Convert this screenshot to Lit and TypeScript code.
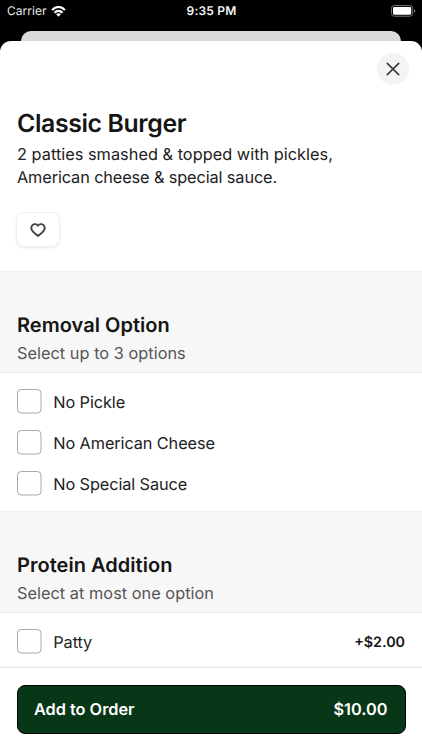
import { LitElement, html, css, nothing } from "lit";
import { customElement, property } from "lit/decorators.js";

interface Option { name: string; price?: string }

@customElement("status-bar")
class StatusBar extends LitElement {
  static styles = css`
    :host { display: grid; grid-template-columns: 1fr auto 1fr; align-items: center; height: 22px; padding: 0 6px 0 7px; box-sizing: border-box; color: #fff; font-size: 12px; line-height: 22px; }
    .left { display: flex; align-items: center; gap: 4.5px; color: #e4e4e4; letter-spacing: 0.02px; }
    .time { font-weight: 600; letter-spacing: 0.2px; color: #f4f4f4; }
    .right { display: flex; justify-content: flex-end; }
    svg { display: block; }
  `;
  render() {
    return html`
      <div class="left"><span>Carrier</span>
        <svg width="15" height="11" viewBox="0 0 16 12" fill="none" stroke="#fff" stroke-width="2.3">
          <path d="M1 4.5C5-0.1 11-0.1 15 4.5"/>
          <path d="M3.6 7.4C6.2 4.6 9.8 4.6 12.4 7.4"/>
          <path d="M8 11.7L5.4 9C7 7.7 9 7.7 10.6 9Z" fill="#fff" stroke="none"/>
        </svg>
      </div>
      <span class="time">9:35 PM</span>
      <div class="right">
        <svg width="25" height="12" viewBox="0 0 25 12">
          <rect x=".5" y=".6" width="21.2" height="10.6" rx="2.8" fill="none" stroke="#777" stroke-width="1"/>
          <rect x="2" y="2.1" width="18.2" height="7.6" rx="1.4" fill="#fff"/>
          <path d="M23 4.2q1.4.5 1.4 1.7T23 7.6Z" fill="#777"/>
        </svg>
      </div>`;
  }
}

@customElement("option-group")
class OptionGroup extends LitElement {
  @property() heading = "";
  @property() hint = "";
  @property({ attribute: false }) options: Option[] = [];
  static styles = css`
    :host { display: block; }
    header { height: 102px; box-sizing: border-box; padding: 39px 17px 0; background: #f7f7f7; border-top: 1px solid #efefef; border-bottom: 1px solid #ececec; }
    h2 { margin: 0; font-size: 20px; line-height: 29px; font-weight: 600; color: #151515; letter-spacing: 0.03px; }
    p { margin: 1px 0 0; font-size: 16.3px; line-height: 24px; color: #555; letter-spacing: 0.04px; }
    .rows { display: flex; flex-direction: column; gap: 16.3px; padding: 16.2px 17px 15.8px 16.5px; }
    .row { display: flex; align-items: center; height: 24.5px; font-size: 16.3px; line-height: 24px; color: #222; letter-spacing: -0.1px; }
    .row span { padding-top: 1.5px; }
    .box { flex: none; display: block; overflow: visible; width: 24.5px; height: 24.5px; margin-right: 12.3px; }
    .box rect { fill: #fff; stroke: #a8a8a8; }
    .row .price { margin-left: auto; padding-top: 2px; font-size: 14.3px; font-weight: 600; color: #151515; letter-spacing: 0; }
  `;
  render() {
    return html`
      <header><h2>${this.heading}</h2><p>${this.hint}</p></header>
      <div class="rows">
        ${this.options.map((o) => html`<div class="row"><svg class="box" viewBox="0 0 24.5 24.5"><rect x=".5" y=".5" width="23.5" height="23.5" rx="3.7"/></svg><span>${o.name}</span>
          ${o.price ? html`<span class="price">${o.price}</span>` : nothing}</div>`)}
      </div>`;
  }
}

@customElement("app-root")
class AppRoot extends LitElement {
  static styles = css`
    :host { display: flex; flex-direction: column; width: 422px; height: 750px; overflow: hidden; background: #000; font-family: Inter, "Liberation Sans", sans-serif; text-rendering: geometricPrecision; }
    .behind { flex: none; height: 10px; margin: 9px 21px 0; border-radius: 10px 10px 0 0; background: #dadada; }
    .sheet { flex: 1; min-height: 0; display: flex; flex-direction: column; background: #fff; border-radius: 11px 11px 0 0; overflow: hidden; }
    .content { height: 626px; flex: none; overflow: hidden; }
    .intro { display: flex; flex-direction: column; height: 230px; box-sizing: border-box; padding: 12px 13px 0 17px; }
    .close { align-self: flex-end; width: 32px; height: 32px; border-radius: 50%; background: #f4f4f4; display: flex; align-items: center; justify-content: center; }
    h1 { margin: 21px 0 0; font-size: 24.8px; line-height: 35px; font-weight: 600; color: #151515; letter-spacing: -0.36px; }
    .desc { margin: 2px 0 0; font-size: 16.3px; line-height: 22.5px; color: #222; letter-spacing: 0.035px; }
    .tight { letter-spacing: -0.11px; }
    .like { margin-top: 25px; width: 42px; height: 33px; border-radius: 7px; background: #fff; box-shadow: 0 0 0 1px #f0f0f0, 0 1px 3px 0 #0000002b; display: flex; align-items: center; justify-content: center; }
    svg { display: block; }
    .footer { flex: 1; box-sizing: border-box; padding: 16.5px 17px 0 16.5px; border-top: 1px solid #ebebeb; background: #fff; box-shadow: 0 -1px 1px #00000008; }
    .order { box-sizing: border-box; width: 389px; height: 49px; padding: 0 17px 1px 16.5px; display: flex; align-items: center; justify-content: space-between; background: #083718; border: 1px solid #000; border-radius: 8px; color: #fff; font-size: 16.3px; font-weight: 600; }
  `;
  render() {
    return html`
      <status-bar></status-bar>
      <div class="behind"></div>
      <div class="sheet">
        <div class="content">
          <div class="intro">
            <div class="close"><svg width="14" height="14" viewBox="0 0 14 14" fill="none" stroke="#3d3d3f" stroke-width="1.7" stroke-linecap="round"><path d="M1.3 1.3l11.4 11.4M12.7 1.3L1.3 12.7"/></svg></div>
            <h1>Classic Burger</h1>
            <p class="desc">2 patties smashed &amp; topped with pickles,<br><span class="tight">American cheese &amp; special sauce.</span></p>
            <div class="like"><svg width="16" height="14" viewBox="0 0 16 14" fill="none" stroke="#444" stroke-width="1.9" stroke-linejoin="round"><path d="M8 2.7C6.6.8 3.9.6 2.5 2.1.8 4 1.2 6.5 2.8 8.3 4 9.7 6 11.5 8 12.9 10 11.5 12 9.7 13.2 8.3 14.8 6.5 15.2 4 13.5 2.1 12.1.6 9.4.8 8 2.7Z"/></svg></div>
          </div>
          <option-group heading="Removal Option" hint="Select up to 3 options" .options=${[{ name: "No Pickle" }, { name: "No American Cheese" }, { name: "No Special Sauce" }]}></option-group>
          <option-group heading="Protein Addition" hint="Select at most one option" .options=${[{ name: "Patty", price: "+$2.00" }]}></option-group>
        </div>
        <div class="footer"><div class="order"><span>Add to Order</span><span>$10.00</span></div></div>
      </div>`;
  }
}
